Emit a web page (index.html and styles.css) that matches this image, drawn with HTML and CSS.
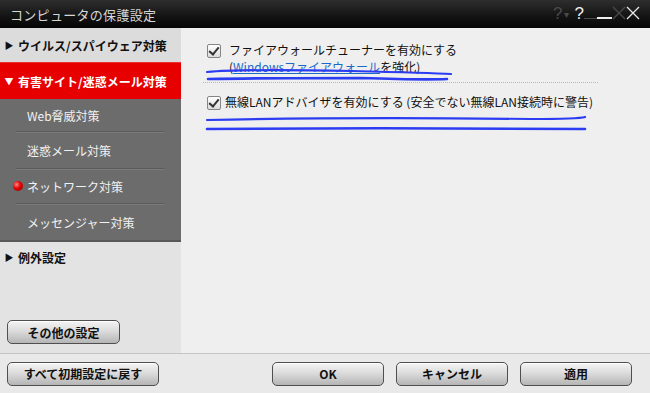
FILE: index.html
```html
<!DOCTYPE html>
<html lang="ja">
<head>
  <meta charset="UTF-8">
  <title>コンピュータの保護設定</title>
  <link rel="stylesheet" href="styles.css">
</head>
<body>
  <div class="window">
    <div class="titlebar">
      <span class="title">コンピュータの保護設定</span>
      <div class="controls">
        <span class="ghost">?</span><span class="ghost small">▾</span>
        <span class="help">?</span>
        <span class="min-ghost"></span><span class="min"></span>
        <svg class="close" width="28" height="16" viewBox="0 0 28 16">
          <path d="M1 2 L13 14 M13 2 L1 14" stroke="#4a4a4a" stroke-width="1.3" fill="none"/>
          <path d="M15 2 L27 14 M27 2 L15 14" stroke="#e8e8e8" stroke-width="1.3" fill="none"/>
        </svg>
      </div>
    </div>

    <div class="main">
      <div class="sidebar">
        <div class="nav-item">
          <span class="tri">▶</span>ウイルス/スパイウェア対策
        </div>
        <div class="nav-item active">
          <span class="tri">▼</span>有害サイト/迷惑メール対策
        </div>
        <div class="submenu">
          <div class="sub-item">Web脅威対策</div>
          <div class="sub-item">迷惑メール対策</div>
          <div class="sub-item current"><span class="dot"></span>ネットワーク対策</div>
          <div class="sub-item">メッセンジャー対策</div>
        </div>
        <div class="nav-item plain">
          <span class="tri">▶</span>例外設定
        </div>
        <div class="side-bottom">
          <button class="btn btn-other">その他の設定</button>
        </div>
      </div>

      <div class="content">
        <div class="option">
          <span class="checkbox"></span>
          <div class="option-text">
            <div>ファイアウォールチューナーを有効にする</div>
            <div>(<a href="#" class="link">Windowsファイアウォール</a>を強化)</div>
          </div>
        </div>
        <div class="separator"></div>
        <div class="option second">
          <span class="checkbox"></span>
          <div class="option-text">無線LANアドバイザを有効にする (安全でない無線LAN接続時に警告)</div>
        </div>

        <svg class="marks" width="469" height="326" viewBox="0 0 469 326">
          <path d="M26 44 C60 41 120 42 170 43 C210 44 250 45 270 46" stroke="#2b3cf2" stroke-width="2.2" fill="none" stroke-linecap="round"/>
          <path d="M27 51 C80 50 130 50 180 50 C210 51 240 52 266 51" stroke="#2b3cf2" stroke-width="2.6" fill="none" stroke-linecap="round"/>
          <path d="M26 92 C120 90 260 90 350 91 C380 91 398 91 404 89" stroke="#2b3cf2" stroke-width="2.2" fill="none" stroke-linecap="round"/>
          <path d="M26 101 C140 100 300 100 404 101" stroke="#2b3cf2" stroke-width="2.6" fill="none" stroke-linecap="round"/>
        </svg>
      </div>
    </div>

    <div class="footer">
      <button class="btn btn-reset">すべて初期設定に戻す</button>
      <div class="footer-right">
        <button class="btn btn-wide">OK</button>
        <button class="btn btn-wide">キャンセル</button>
        <button class="btn btn-wide">適用</button>
      </div>
    </div>
  </div>
</body>
</html>
```

FILE: styles.css
```css
body {
  margin: 0;
  font-family: "Noto Sans CJK JP", "Noto Sans", sans-serif;
  font-size: 12px;
  background-color: #e9e9e9;
}

.window {
  width: 650px;
  height: 393px;
  display: flex;
  flex-direction: column;
  overflow: hidden;
  background-color: #e9e9e9;
}

.titlebar {
  height: 28px;
  flex-shrink: 0;
  display: flex;
  align-items: center;
  justify-content: space-between;
  background: linear-gradient(#2e2e2e, #151515 55%, #050505);
  color: #d6d6d6;
}

.title {
  font-size: 13px;
  margin-left: 10px;
  letter-spacing: 0.3px;
}

.controls {
  display: flex;
  align-items: center;
  margin-right: 10px;
  height: 28px;
}

.ghost {
  color: #4a4a4a;
  font-family: "Liberation Sans", sans-serif;
  font-size: 17px;
}

.ghost.small {
  font-size: 10px;
  margin-left: 1px;
  margin-right: 6px;
}

.help {
  color: #eeeeee;
  font-family: "Liberation Sans", sans-serif;
  font-size: 17px;
}

.min-ghost {
  width: 13px;
  height: 1px;
  margin-top: 9px;
  background-color: #4a4a4a;
}

.min {
  width: 15px;
  height: 2px;
  margin-top: 8px;
  background-color: #eeeeee;
}

.close {
  margin-top: -2px;
}

.main {
  flex: 1;
  display: flex;
  min-height: 0;
}

.sidebar {
  width: 181px;
  flex-shrink: 0;
  display: flex;
  flex-direction: column;
  background-color: #e3e3e3;
}

.nav-item {
  height: 34px;
  display: flex;
  align-items: center;
  font-weight: bold;
  color: #111;
  background-color: #dcdcdc;
}

.nav-item.active {
  height: 36px;
  background-color: #e60000;
  color: #ffffff;
  border-top: 1px solid #f03030;
}

.nav-item.plain {
  background-color: transparent;
  height: 31px;
}

.tri {
  width: 18px;
  font-size: 9px;
  text-align: center;
}

.submenu {
  background-color: #6c6c6c;
  border-bottom: 2px solid #585858;
  padding: 0 16px 0 27px;
}

.sub-item {
  box-sizing: border-box;
  height: 35px;
  display: flex;
  align-items: center;
  color: #f2f2f2;
  border-bottom: 1px solid #5c5c5c;
  box-shadow: 0 1px 0 #7a7a7a;
  margin-left: -11px;
  padding-left: 11px;
  position: relative;
}

.sub-item:first-child {
  height: 33px;
}

.sub-item:nth-child(2) {
  height: 37px;
}

.sub-item:last-child {
  height: 36px;
  border-bottom: none;
  box-shadow: none;
}

.sub-item.current::after {
  content: "";
  position: absolute;
  right: -24px;
  top: 12px;
  border-top: 6px solid transparent;
  border-bottom: 6px solid transparent;
  border-left: 8px solid #6c6c6c;
}

.dot {
  position: absolute;
  left: -3px;
  width: 10px;
  height: 10px;
  border-radius: 50%;
  background: radial-gradient(circle at 35% 35%, #ff8080, #e00000 45%, #8a0000);
}

.side-bottom {
  flex: 1;
  display: flex;
  align-items: flex-end;
  padding: 0 0 9px 7px;
}

.content {
  flex: 1;
  position: relative;
  background-color: #efefef;
  padding: 15px 0 0 26px;
}

.option {
  display: flex;
  align-items: flex-start;
  color: #111;
  line-height: 17px;
}

.checkbox {
  width: 12px;
  height: 12px;
  flex-shrink: 0;
  border: 1px solid #858585;
  border-radius: 2px;
  background: linear-gradient(#ffffff, #dcdcdc);
  margin-right: 8px;
  margin-top: 1px;
  position: relative;
}

.checkbox::after {
  content: "";
  position: absolute;
  left: 3px;
  top: 0px;
  width: 4px;
  height: 8px;
  border-right: 2px solid #333;
  border-bottom: 2px solid #333;
  transform: rotate(40deg);
}

.option-text {
  margin-top: -2px;
}

.option.second .checkbox {
  margin-right: 4px;
}

.link {
  color: #1b6ac9;
  text-decoration: underline;
}

.separator {
  width: 395px;
  margin: 7px 0 12px -4px;
  border-top: 1px dotted #b9b9b9;
}

.marks {
  position: absolute;
  left: 0;
  top: 0;
  pointer-events: none;
}

.footer {
  height: 39px;
  flex-shrink: 0;
  border-top: 1px solid #c4c4c4;
  display: flex;
  align-items: center;
  justify-content: space-between;
  padding: 0 18px 0 7px;
  background-color: #e9e9e9;
}

.footer-right {
  display: flex;
  gap: 12px;
}

.btn {
  height: 24px;
  font-family: "Noto Sans CJK JP", "Noto Sans", sans-serif;
  font-size: 12px;
  font-weight: bold;
  color: #111;
  border: 1px solid #4f4f4f;
  border-radius: 5px;
  background: linear-gradient(#f4f4f4, #dcdcdc 45%, #b5b5b5);
  box-shadow: inset 0 1px 0 #ffffff;
  padding: 0;
  cursor: pointer;
}

.btn-other {
  width: 113px;
}

.btn-reset {
  width: 152px;
}

.btn-wide {
  width: 112px;
}
```
